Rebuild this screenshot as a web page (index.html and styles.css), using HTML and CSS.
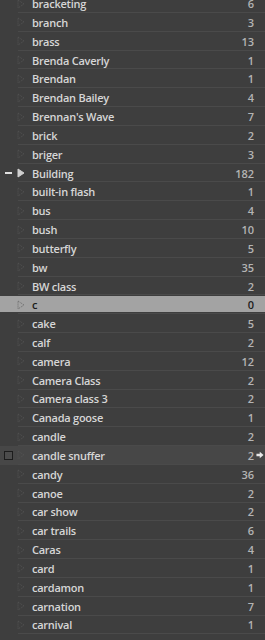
FILE: index.html
```html
<!DOCTYPE html>
<html>
<head>
<meta charset="utf-8">
<link rel="stylesheet" href="styles.css">
</head>
<body>
<div class="list">
  <div class="row"><span class="mark"></span><span class="tri"><svg viewBox="0 0 8 10"><path d="M1 1 L7 5 L1 9 Z"/></svg></span><span class="name">bracketing</span><span class="count">6</span><span class="act"></span></div>
  <div class="row"><span class="mark"></span><span class="tri"><svg viewBox="0 0 8 10"><path d="M1 1 L7 5 L1 9 Z"/></svg></span><span class="name">branch</span><span class="count">3</span><span class="act"></span></div>
  <div class="row"><span class="mark"></span><span class="tri"><svg viewBox="0 0 8 10"><path d="M1 1 L7 5 L1 9 Z"/></svg></span><span class="name">brass</span><span class="count">13</span><span class="act"></span></div>
  <div class="row"><span class="mark"></span><span class="tri"><svg viewBox="0 0 8 10"><path d="M1 1 L7 5 L1 9 Z"/></svg></span><span class="name">Brenda Caverly</span><span class="count">1</span><span class="act"></span></div>
  <div class="row"><span class="mark"></span><span class="tri"><svg viewBox="0 0 8 10"><path d="M1 1 L7 5 L1 9 Z"/></svg></span><span class="name">Brendan</span><span class="count">1</span><span class="act"></span></div>
  <div class="row"><span class="mark"></span><span class="tri"><svg viewBox="0 0 8 10"><path d="M1 1 L7 5 L1 9 Z"/></svg></span><span class="name">Brendan Bailey</span><span class="count">4</span><span class="act"></span></div>
  <div class="row"><span class="mark"></span><span class="tri"><svg viewBox="0 0 8 10"><path d="M1 1 L7 5 L1 9 Z"/></svg></span><span class="name">Brennan's Wave</span><span class="count">7</span><span class="act"></span></div>
  <div class="row"><span class="mark"></span><span class="tri"><svg viewBox="0 0 8 10"><path d="M1 1 L7 5 L1 9 Z"/></svg></span><span class="name">brick</span><span class="count">2</span><span class="act"></span></div>
  <div class="row"><span class="mark"></span><span class="tri"><svg viewBox="0 0 8 10"><path d="M1 1 L7 5 L1 9 Z"/></svg></span><span class="name">briger</span><span class="count">3</span><span class="act"></span></div>
  <div class="row"><span class="mark"><span class="dash"></span></span><span class="tri solid"><svg viewBox="0 0 8 10"><path d="M1 1 L7 5 L1 9 Z"/></svg></span><span class="name">Building</span><span class="count">182</span><span class="act"></span></div>
  <div class="row"><span class="mark"></span><span class="tri"><svg viewBox="0 0 8 10"><path d="M1 1 L7 5 L1 9 Z"/></svg></span><span class="name">built-in flash</span><span class="count">1</span><span class="act"></span></div>
  <div class="row"><span class="mark"></span><span class="tri"><svg viewBox="0 0 8 10"><path d="M1 1 L7 5 L1 9 Z"/></svg></span><span class="name">bus</span><span class="count">4</span><span class="act"></span></div>
  <div class="row"><span class="mark"></span><span class="tri"><svg viewBox="0 0 8 10"><path d="M1 1 L7 5 L1 9 Z"/></svg></span><span class="name">bush</span><span class="count">10</span><span class="act"></span></div>
  <div class="row"><span class="mark"></span><span class="tri"><svg viewBox="0 0 8 10"><path d="M1 1 L7 5 L1 9 Z"/></svg></span><span class="name">butterfly</span><span class="count">5</span><span class="act"></span></div>
  <div class="row"><span class="mark"></span><span class="tri"><svg viewBox="0 0 8 10"><path d="M1 1 L7 5 L1 9 Z"/></svg></span><span class="name">bw</span><span class="count">35</span><span class="act"></span></div>
  <div class="row"><span class="mark"></span><span class="tri"><svg viewBox="0 0 8 10"><path d="M1 1 L7 5 L1 9 Z"/></svg></span><span class="name">BW class</span><span class="count">2</span><span class="act"></span></div>
  <div class="row selected"><span class="mark"></span><span class="tri"><svg viewBox="0 0 8 10"><path d="M1 1 L7 5 L1 9 Z"/></svg></span><span class="name">c</span><span class="count">0</span><span class="act"></span></div>
  <div class="row"><span class="mark"></span><span class="tri"><svg viewBox="0 0 8 10"><path d="M1 1 L7 5 L1 9 Z"/></svg></span><span class="name">cake</span><span class="count">5</span><span class="act"></span></div>
  <div class="row"><span class="mark"></span><span class="tri"><svg viewBox="0 0 8 10"><path d="M1 1 L7 5 L1 9 Z"/></svg></span><span class="name">calf</span><span class="count">2</span><span class="act"></span></div>
  <div class="row"><span class="mark"></span><span class="tri"><svg viewBox="0 0 8 10"><path d="M1 1 L7 5 L1 9 Z"/></svg></span><span class="name">camera</span><span class="count">12</span><span class="act"></span></div>
  <div class="row"><span class="mark"></span><span class="tri"><svg viewBox="0 0 8 10"><path d="M1 1 L7 5 L1 9 Z"/></svg></span><span class="name">Camera Class</span><span class="count">2</span><span class="act"></span></div>
  <div class="row"><span class="mark"></span><span class="tri"><svg viewBox="0 0 8 10"><path d="M1 1 L7 5 L1 9 Z"/></svg></span><span class="name">Camera class 3</span><span class="count">2</span><span class="act"></span></div>
  <div class="row"><span class="mark"></span><span class="tri"><svg viewBox="0 0 8 10"><path d="M1 1 L7 5 L1 9 Z"/></svg></span><span class="name">Canada goose</span><span class="count">1</span><span class="act"></span></div>
  <div class="row"><span class="mark"></span><span class="tri"><svg viewBox="0 0 8 10"><path d="M1 1 L7 5 L1 9 Z"/></svg></span><span class="name">candle</span><span class="count">2</span><span class="act"></span></div>
  <div class="row hover"><span class="mark"><span class="check"></span></span><span class="tri"><svg viewBox="0 0 8 10"><path d="M1 1 L7 5 L1 9 Z"/></svg></span><span class="name">candle snuffer</span><span class="count">2</span><span class="act"><svg viewBox="0 0 9 9"><path d="M0.5 3.2 H4.2 V0.8 L8.5 4.5 L4.2 8.2 V5.8 H0.5 Z"/></svg></span></div>
  <div class="row"><span class="mark"></span><span class="tri"><svg viewBox="0 0 8 10"><path d="M1 1 L7 5 L1 9 Z"/></svg></span><span class="name">candy</span><span class="count">36</span><span class="act"></span></div>
  <div class="row"><span class="mark"></span><span class="tri"><svg viewBox="0 0 8 10"><path d="M1 1 L7 5 L1 9 Z"/></svg></span><span class="name">canoe</span><span class="count">2</span><span class="act"></span></div>
  <div class="row"><span class="mark"></span><span class="tri"><svg viewBox="0 0 8 10"><path d="M1 1 L7 5 L1 9 Z"/></svg></span><span class="name">car show</span><span class="count">2</span><span class="act"></span></div>
  <div class="row"><span class="mark"></span><span class="tri"><svg viewBox="0 0 8 10"><path d="M1 1 L7 5 L1 9 Z"/></svg></span><span class="name">car trails</span><span class="count">6</span><span class="act"></span></div>
  <div class="row"><span class="mark"></span><span class="tri"><svg viewBox="0 0 8 10"><path d="M1 1 L7 5 L1 9 Z"/></svg></span><span class="name">Caras</span><span class="count">4</span><span class="act"></span></div>
  <div class="row"><span class="mark"></span><span class="tri"><svg viewBox="0 0 8 10"><path d="M1 1 L7 5 L1 9 Z"/></svg></span><span class="name">card</span><span class="count">1</span><span class="act"></span></div>
  <div class="row"><span class="mark"></span><span class="tri"><svg viewBox="0 0 8 10"><path d="M1 1 L7 5 L1 9 Z"/></svg></span><span class="name">cardamon</span><span class="count">1</span><span class="act"></span></div>
  <div class="row"><span class="mark"></span><span class="tri"><svg viewBox="0 0 8 10"><path d="M1 1 L7 5 L1 9 Z"/></svg></span><span class="name">carnation</span><span class="count">7</span><span class="act"></span></div>
  <div class="row"><span class="mark"></span><span class="tri"><svg viewBox="0 0 8 10"><path d="M1 1 L7 5 L1 9 Z"/></svg></span><span class="name">carnival</span><span class="count">1</span><span class="act"></span></div>
</div>
</body>
</html>
```

FILE: styles.css
```css
html, body {
  margin: 0;
  padding: 0;
  background: #3e3e3e;
  overflow: hidden;
}

.list {
  margin-top: -5.83px;
  display: flex;
  flex-direction: column;
  font-family: "Open Sans", "Noto Sans", sans-serif;
  font-size: 11px;
}

.row {
  height: 18.83px;
  box-sizing: border-box;
  display: grid;
  grid-template-columns: 16px 16px 1fr auto 11px;
  align-items: center;
  position: relative;
  isolation: isolate;
  color: #d6d6d6;
}

.row::after {
  content: "";
  position: absolute;
  left: 18px;
  right: 0;
  bottom: 0;
  height: 1px;
  background: #4a4a4a;
}

.mark {
  display: flex;
  align-items: center;
  justify-content: center;
  height: 100%;
}

.dash {
  width: 7px;
  height: 2px;
  background: #e0e0e0;
  margin-left: 1px;
}

.check {
  width: 7px;
  height: 7px;
  border: 1px solid #1c1c1c;
  background: #4c4c4c;
}

.tri {
  display: flex;
  align-items: center;
  padding-left: 1px;
}

.tri svg {
  width: 8px;
  height: 10px;
}

.tri path {
  fill: none;
  stroke: #555555;
  stroke-width: 1;
  stroke-dasharray: 1 1;
}

.tri.solid path {
  fill: #cfcfcf;
  stroke: #cfcfcf;
  stroke-dasharray: none;
}

.name {
  white-space: nowrap;
  font-weight: 600;
  letter-spacing: -0.25px;
}

.count {
  color: #b4b4b4;
  font-weight: 600;
  text-align: right;
}

.act {
  display: flex;
  align-items: center;
  justify-content: center;
  height: 100%;
}

.act svg {
  width: 8px;
  height: 8px;
}

.act path {
  fill: #e8e8e8;
}

.selected {
  color: #1c1c1c;
}

.selected::before {
  content: "";
  position: absolute;
  left: 0;
  right: 0;
  top: 1px;
  bottom: 2px;
  background: #a3a3a3;
  z-index: -1;
}

.selected .count {
  color: #1c1c1c;
}

.selected .tri path {
  stroke: #6a6a6a;
}

.hover::before {
  content: "";
  position: absolute;
  left: 0;
  right: 0;
  top: 0;
  bottom: 0;
  background: #474747;
  z-index: -1;
}
```
